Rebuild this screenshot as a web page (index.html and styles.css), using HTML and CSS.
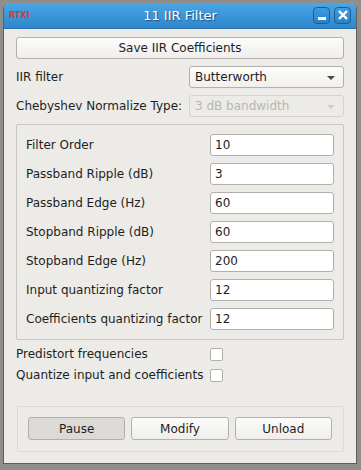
FILE: index.html
```html
<!DOCTYPE html>
<html lang="en">
<head>
    <meta charset="utf-8">
    <title>11 IIR Filter</title>
    <link rel="stylesheet" href="styles.css">
</head>
<body>
<div class="window">
    <div class="titlebar">
        <span class="logo">RTXI</span>
        <span class="title">11 IIR Filter</span>
        <span class="tb-btns">
            <i class="tb-btn"><svg width="17" height="17" viewBox="0 0 17 17"><rect x="5" y="10" width="8" height="3" fill="#fff"/></svg></i>
            <i class="tb-btn"><svg width="17" height="17" viewBox="0 0 17 17"><path d="M5 4 L13 12 M13 4 L5 12" stroke="#fff" stroke-width="2.4"/></svg></i>
        </span>
    </div>
    <main class="content">
        <button class="btn btn-wide">Save IIR Coefficients</button>

        <div class="field">
            <label>IIR filter</label>
            <div class="combo">Butterworth<i class="arrow"></i></div>
        </div>
        <div class="field">
            <label>Chebyshev Normalize Type:</label>
            <div class="combo disabled">3 dB bandwidth<i class="arrow"></i></div>
        </div>

        <div class="group params">
            <label>Filter Order</label><input value="10">
            <label>Passband Ripple (dB)</label><input value="3">
            <label>Passband Edge (Hz)</label><input value="60">
            <label>Stopband Ripple (dB)</label><input value="60">
            <label>Stopband Edge (Hz)</label><input value="200">
            <label>Input quantizing factor</label><input value="12">
            <label>Coefficients quantizing factor</label><input value="12">
        </div>

        <div class="checks">
            <label>Predistort frequencies</label><i class="check"></i>
            <label>Quantize input and coefficients</label><i class="check"></i>
        </div>

        <div class="group actions">
            <button class="btn pressed">Pause</button>
            <button class="btn">Modify</button>
            <button class="btn">Unload</button>
        </div>
    </main>
</div>
</body>
</html>
```

FILE: styles.css
```css
html, body {
    margin: 0;
    padding: 0;
    background-color: #8f8e8b;
    font-family: "DejaVu Sans", "Noto Sans", sans-serif;
    font-size: 12px;
    color: #1e1e1e;
}

.window {
    width: 352px;
    margin: 3px 0 0 3px;
    background-color: #ecebe7;
    border: 1px solid #5f5e5b;
    border-top: none;
    border-radius: 6px 6px 0 0;
    overflow: hidden;
}

.titlebar {
    display: flex;
    align-items: center;
    height: 25px;
    padding: 0 5px 0 5px;
    background: linear-gradient(#4aa6e4, #2f86cc);
    border-bottom: 1px solid #2a6fa8;
}

.titlebar .logo {
    width: 38px;
    font-size: 8px;
    font-weight: bold;
    color: #d83a2a;
}

.titlebar .title {
    flex: 1;
    text-align: center;
    color: #fff;
    font-size: 13px;
    text-shadow: 1px 1px 1px #1d4f7a;
}

.tb-btns {
    display: flex;
    gap: 4px;
}

.tb-btn {
    display: block;
    width: 17px;
    height: 17px;
    border: 1px solid #1f5d91;
    border-radius: 4px;
    background: linear-gradient(#3f9ce0, #2c81c6);
    box-sizing: border-box;
}

.tb-btn svg {
    display: block;
    margin: -1px;
}

.content {
    display: flex;
    flex-direction: column;
    gap: 7px;
    padding: 8px 12px 11px 12px;
}

.btn {
    font: inherit;
    color: inherit;
    height: 23px;
    border: 1px solid #b3b0ab;
    border-radius: 3px;
    background: linear-gradient(#fcfcfb, #efeeec);
    padding: 0;
}

.btn-wide {
    height: 22px;
}

.btn.pressed {
    background: #dcdad6;
}

.field {
    display: grid;
    grid-template-columns: 1fr 155px;
    align-items: center;
}

.combo {
    position: relative;
    height: 22px;
    line-height: 20px;
    padding: 0 5px;
    box-sizing: border-box;
    border: 1px solid #b3b0ab;
    border-radius: 3px;
    background: linear-gradient(#fcfcfb, #f1f0ee);
}

.combo .arrow {
    position: absolute;
    right: 8px;
    top: 9px;
    border-left: 4px solid transparent;
    border-right: 4px solid transparent;
    border-top: 4px solid #4a4a48;
}

.combo.disabled {
    color: #b9b7b3;
    border-color: #d6d3cf;
    background: #ecebe7;
}

.combo.disabled .arrow {
    border-top-color: #d0cecb;
}

.group {
    border: 1px solid #c9c6c1;
    border-radius: 2px;
}

.params {
    display: grid;
    grid-template-columns: 1fr 124px;
    align-items: center;
    row-gap: 7px;
    padding: 9px;
}

.params input {
    font: inherit;
    color: inherit;
    height: 22px;
    box-sizing: border-box;
    border: 1px solid #b3b0ab;
    border-radius: 3px;
    padding: 0 4px;
    background: #fff;
    outline: none;
}

.checks {
    display: grid;
    grid-template-columns: 194px 13px;
    row-gap: 7px;
    align-items: center;
}

.check {
    display: block;
    width: 13px;
    height: 13px;
    box-sizing: border-box;
    border: 1px solid #b3b0ab;
    border-radius: 2px;
    background: #fff;
}

.actions {
    display: grid;
    grid-template-columns: 1fr 1fr 1fr;
    column-gap: 6px;
    padding: 10px 11px 11px 10px;
    margin-top: 17px;
    margin-left: 1px;
    border-color: #dcdad5;
}
```
